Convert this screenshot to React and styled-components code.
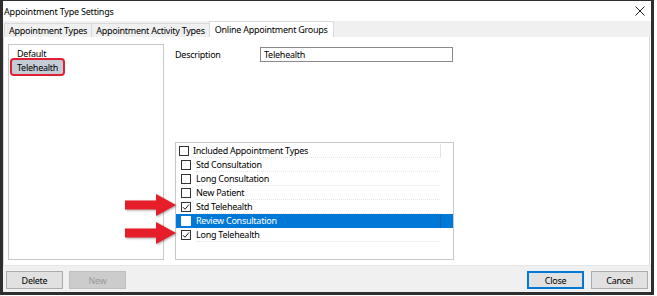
import React from "react";
import styled, { createGlobalStyle } from "styled-components";

const GlobalStyle = createGlobalStyle`
  html, body { margin: 0; padding: 0; background: #fff; }
  body {
    font-family: "Noto Sans", "Open Sans", sans-serif;
    font-size: 9px;
    letter-spacing: -0.25px;
    color: #000;
  }
`;

const Screen = styled.div`
  width: 657px;
  height: 296px;
  background: #fff;
  overflow: hidden;
`;

const Window = styled.div`
  position: relative;
  width: 648px;
  height: 291px;
  border: 3px solid #2e2e2e;
  border-top-width: 1px;
  display: flex;
  flex-direction: column;
  background: #fff;
`;

const TitleBar = styled.div`
  height: 20px;
  display: flex;
  align-items: center;
  justify-content: space-between;
  padding: 0 6px 0 1px;
  font-size: 9px;
  letter-spacing: -0.2px;
`;

const TabStrip = styled.div`
  height: 16px;
  display: flex;
  align-items: flex-end;
  padding-left: 1px;
  background: #f0f0f0;
`;

const Tab = styled.div`
  height: ${(p) => (p.$active ? 16 : 14)}px;
  box-sizing: border-box;
  display: flex;
  align-items: center;
  padding: 0 ${(p) => (p.$active ? 5 : 4)}px;
  margin-right: -1px;
  border: 1px solid #d9d9d9;
  border-bottom: none;
  background: ${(p) => (p.$active ? "#fff" : "#f0f0f0")};
  position: relative;
  z-index: ${(p) => (p.$active ? 1 : 0)};
`;

const Panel = styled.div`
  flex: 1;
  display: flex;
  gap: 11px;
  padding: 7px 4px 5px 4px;
  border-left: 1px solid #d9d9d9;
  border-right: 1px solid #d9d9d9;
  margin-right: 1px;
  background: #fff;
`;

const GroupList = styled.div`
  width: 156px;
  box-sizing: border-box;
  border: 1px solid #c8c8c8;
  padding-top: 1px;
  display: flex;
  flex-direction: column;
`;

const GroupItem = styled.div`
  width: 51px;
  height: 14px;
  box-sizing: border-box;
  margin-left: 3px;
  padding-left: 5px;
  display: flex;
  align-items: center;
  background: ${(p) => (p.$selected ? "#c4ccd6" : "transparent")};
  outline: ${(p) => (p.$marked ? "2px solid #e01f33" : "none")};
  border-radius: 2px;
`;

const RightColumn = styled.div`
  width: 279px;
  display: flex;
  flex-direction: column;
`;

const FieldRow = styled.div`
  display: flex;
  align-items: center;
  margin-top: 3px;
  height: 15px;
`;

const FieldLabel = styled.div`
  width: 85px;
`;

const TextInput = styled.div`
  width: 193px;
  height: 15px;
  box-sizing: border-box;
  border: 1px solid #8a8a8a;
  padding-left: 3px;
  display: flex;
  align-items: center;
`;

const CheckList = styled.div`
  margin-top: auto;
  height: 118px;
  box-sizing: border-box;
  border: 1px solid #c8c8c8;
  padding-top: 1px;
`;

const CheckRow = styled.div`
  height: 14px;
  display: flex;
  background: ${(p) => (p.$selected ? "#0078d7" : "transparent")};
  color: ${(p) => (p.$selected ? "#fff" : "#000")};
`;

const CheckCell = styled.div`
  width: ${(p) => (p.$header ? 17 : 20)}px;
  box-sizing: border-box;
  padding-left: ${(p) => (p.$header ? 3 : 5)}px;
  display: flex;
  align-items: center;
`;

const RowLabel = styled.div`
  flex: 0 0 ${(p) => (p.$header ? 247 : 244)}px;
  box-sizing: border-box;
  display: flex;
  align-items: center;
  border-bottom: 1px dotted ${(p) => (p.$selected ? "transparent" : "#e6e6e6")};
`;

const RowTail = styled.div`
  flex: 1;
  border-left: 1px solid
    ${(p) => (p.$divider ? (p.$selected ? "#1f5fa0" : "#e3e3e3") : "transparent")};
`;

const Box = styled.div`
  width: 10px;
  height: 10px;
  box-sizing: border-box;
  border: 1px solid ${(p) => (p.$onBlue ? "#fff" : "#333")};
  background: #fff;
  display: flex;
  align-items: center;
  justify-content: center;
`;

const Footer = styled.div`
  height: 27px;
  box-sizing: border-box;
  display: flex;
  justify-content: space-between;
  padding: 5px 3px 0 3px;
  background: #f0f0f0;
  border-top: 1px solid #e6e6e6;
`;

const ButtonGroup = styled.div`
  display: flex;
  gap: ${(p) => p.$gap}px;
`;

const Button = styled.div`
  width: 57px;
  height: 18px;
  box-sizing: border-box;
  display: flex;
  align-items: center;
  justify-content: center;
  border: 1px solid ${(p) => (p.$default ? "#0078d7" : p.$disabled ? "#bfbfbf" : "#adadad")};
  box-shadow: ${(p) => (p.$default ? "inset 0 0 0 1px #0078d7" : "none")};
  background: ${(p) => (p.$disabled ? "#cccccc" : "#e1e1e1")};
  color: ${(p) => (p.$disabled ? "#9a9a9a" : "#000")};
`;

const Arrow = styled.svg`
  position: absolute;
  left: 122px;
  top: ${(p) => p.$top}px;
  filter: drop-shadow(1px 1px 1px rgba(0, 0, 0, 0.35));
`;

const CloseIcon = () => (
  <svg width="10" height="10" viewBox="0 0 10 10">
    <path d="M0.5 0.5 L9.5 9.5 M9.5 0.5 L0.5 9.5" stroke="#222" strokeWidth="1" />
  </svg>
);

const Tick = () => (
  <svg width="8" height="8" viewBox="0 0 8 8">
    <path d="M1 4.2 L3 6.3 L7 1.5" fill="none" stroke="#222" strokeWidth="1" />
  </svg>
);

const RedArrow = ({ top }) => (
  <Arrow $top={top} width="52" height="23" viewBox="0 0 52 23">
    <polygon points="0,6.5 31,6.5 31,0 51,11 31,22 31,15.5 0,15.5" fill="#e61e2a" />
  </Arrow>
);

const types = [
  { name: "Std Consultation" },
  { name: "Long Consultation" },
  { name: "New Patient" },
  { name: "Std Telehealth", checked: true },
  { name: "Review Consultation", selected: true },
  { name: "Long Telehealth", checked: true },
];

export default function App() {
  return (
    <>
      <GlobalStyle />
      <Screen>
        <Window>
          <TitleBar>
            <span>Appointment Type Settings</span>
            <CloseIcon />
          </TitleBar>
          <TabStrip>
            <Tab>Appointment Types</Tab>
            <Tab>Appointment Activity Types</Tab>
            <Tab $active>Online Appointment Groups</Tab>
          </TabStrip>
          <Panel>
            <GroupList>
              <GroupItem>Default</GroupItem>
              <GroupItem $selected $marked>
                Telehealth
              </GroupItem>
            </GroupList>
            <RightColumn>
              <FieldRow>
                <FieldLabel>Description</FieldLabel>
                <TextInput>Telehealth</TextInput>
              </FieldRow>
              <CheckList>
                <CheckRow>
                  <CheckCell $header>
                    <Box />
                  </CheckCell>
                  <RowLabel $header>Included Appointment Types</RowLabel>
                  <RowTail $divider />
                </CheckRow>
                {types.map((t) => (
                  <CheckRow key={t.name} $selected={t.selected}>
                    <CheckCell>
                      <Box $onBlue={t.selected}>{t.checked && <Tick />}</Box>
                    </CheckCell>
                    <RowLabel $selected={t.selected}>{t.name}</RowLabel>
                    <RowTail $divider={t.selected} $selected={t.selected} />
                  </CheckRow>
                ))}
              </CheckList>
            </RightColumn>
          </Panel>
          <Footer>
            <ButtonGroup $gap={6}>
              <Button>Delete</Button>
              <Button $disabled>New</Button>
            </ButtonGroup>
            <ButtonGroup $gap={7}>
              <Button $default>Close</Button>
              <Button>Cancel</Button>
            </ButtonGroup>
          </Footer>
          <RedArrow top={193} />
          <RedArrow top={221} />
        </Window>
      </Screen>
    </>
  );
}
